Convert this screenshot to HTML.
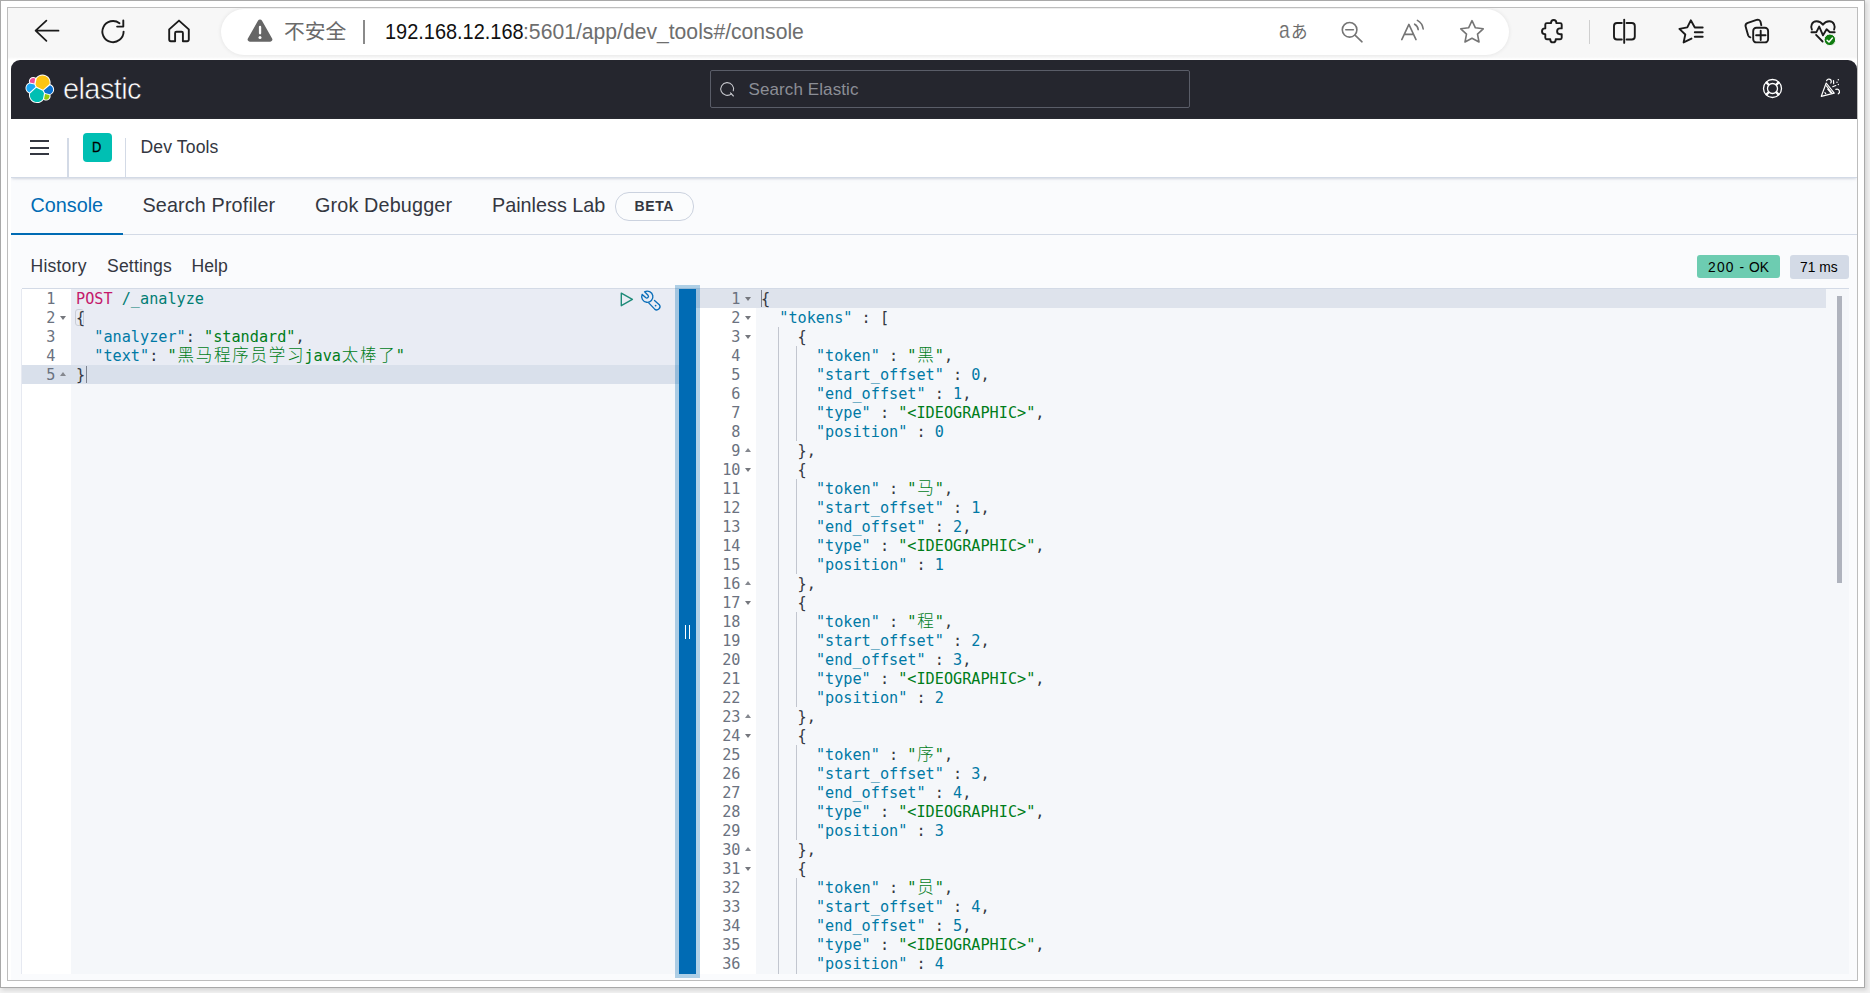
<!DOCTYPE html>
<html lang="zh-CN">
<head>
<meta charset="utf-8">
<title>Console - Dev Tools - Elastic</title>
<style>
*{box-sizing:border-box;margin:0;padding:0}
html,body{width:1870px;height:993px;overflow:hidden;background:#f1f1f1}
body{position:relative;font-family:"Liberation Sans","Noto Sans CJK SC",sans-serif;color:#343741}
.abs{position:absolute}
#outer{position:absolute;left:0;top:0;width:1865px;height:988px;border:1px solid #a9a9a9;background:#fff;box-shadow:2px 2px 4px rgba(0,0,0,.12)}
#inner{position:absolute;left:7px;top:7px;width:1851px;height:974px;border:1px solid #bdbdbd;background:#fff;overflow:hidden}
/* coordinates inside #inner are offset by 8px: use a shifted canvas */
#cv{position:absolute;left:-8px;top:-8px;width:1870px;height:993px}
#chrome{position:absolute;left:8px;top:8px;width:1849px;height:53px;background:#f7f7f7}
#pill{position:absolute;left:221px;top:9.250px;width:1288px;height:45.250px;border-radius:23px;background:#fff;box-shadow:0 0 4px rgba(0,0,0,.09)}
.t{position:absolute;white-space:nowrap;line-height:1}
#page{position:absolute;left:11px;top:60px;width:1846px;height:920px;background:#fafbfd;border-radius:9px 9px 0 0;overflow:hidden}
#page>#pg{position:absolute;left:-11px;top:-60px;width:1870px;height:993px}
#hdr{position:absolute;left:11px;top:60px;width:1846px;height:59px;background:#25262e}
#search{position:absolute;left:710px;top:70px;width:480px;height:38px;border:1px solid #5a5d68;border-radius:2px;background:#25262e}
#nav{position:absolute;left:11px;top:119px;width:1846px;height:59px;background:#fff;border-bottom:1px solid #d3dae6;box-shadow:0 2px 2px -1px rgba(152,162,179,.3),0 1px 5px -2px rgba(152,162,179,.3)}
.vsep{position:absolute;width:1px;background:#d3dae6}
#avatar{position:absolute;left:83px;top:133px;width:29px;height:29px;border-radius:4px;background:#00bfb3}
#tabline{position:absolute;left:11px;top:234px;width:1846px;height:1px;background:#d3dae6}
#tabsel{position:absolute;left:11px;top:233px;width:112px;height:2px;background:#006bb4}
#beta{position:absolute;left:615px;top:192px;width:79px;height:29px;border:1px solid #cbd2df;border-radius:14px;background:#fbfcfd}
.badge{position:absolute;height:23px;border-radius:3px}
/* editors */
#edtop{position:absolute;left:22px;top:288px;width:1827px;height:1px;background:#d3dae6}
#led{position:absolute;left:22px;top:289px;width:657px;height:685px;background:#f5f7fa;overflow:hidden}
#lgut{position:absolute;left:0;top:0;width:49px;height:685px;background:#fff}
#red{position:absolute;left:700px;top:289px;width:1149px;height:685px;background:#f5f7fa;overflow:hidden}
#rgut{position:absolute;left:0;top:0;width:56px;height:685px;background:#fff}
.code{position:absolute;top:1px;font-family:"DejaVu Sans Mono","Liberation Mono","Noto Sans CJK SC",monospace;font-size:15.2px;line-height:19px;color:#343741;white-space:pre;font-kerning:none;font-variant-ligatures:none}
.ln{position:absolute;left:0;height:19px;white-space:pre}
.gn{position:absolute;left:0;height:19px;text-align:right;color:#6b7280;font-family:"DejaVu Sans Mono","Liberation Mono",monospace;font-size:15.2px;line-height:19px}
.fd,.fu{position:absolute;width:0;height:0;border-left:3px solid transparent;border-right:3px solid transparent}
.fd{border-top:4px solid #75777d}
.fu{border-bottom:4px solid #85888f}
.m{color:#c4196b}.u{color:#017d73}.k{color:#0079a5}.s{color:#007d1a}.n{color:#0079a5}.p{color:#343741}
.cj{display:inline-block;width:18.26px;text-align:center;font-family:"Noto Sans CJK SC","WenQuanYi Zen Hei",sans-serif;font-weight:300;font-size:16.5px;line-height:19px;vertical-align:top;position:relative;top:-2px}
#resz-o{position:absolute;left:675px;top:285px;width:25px;height:693px;background:rgba(0,107,180,.3)}
#resz{position:absolute;left:679px;top:289px;width:17px;height:685px;background:#006bb4}
.hl{position:absolute;height:19px}
.ig{position:absolute;width:1px;background:#c2c6cf}
svg{position:absolute;overflow:visible}
</style>
</head>
<body>
<div id="outer"></div>
<div id="inner"><div id="cv">
<div id="chrome"></div>
<div class="abs" style="left:8px;top:57px;width:1849px;height:4px;background:linear-gradient(#f7f7f7,#fff 60%)"></div>
<div id="pill"></div>

<!-- browser toolbar icons -->
<svg id="ic-back" style="left:34px;top:19px" width="26" height="24" viewBox="0 0 26 24" fill="none" stroke="#1b1b1b" stroke-width="1.75" stroke-linecap="round" stroke-linejoin="round"><path d="M24.5 11.7H1.8M12.4 1.6 1.6 11.7l10.8 10.1"/></svg>
<svg id="ic-reload" style="left:100px;top:18px" width="26" height="26" viewBox="0 0 26 26" fill="none" stroke="#1b1b1b" stroke-width="1.9" stroke-linecap="round" stroke-linejoin="round"><path d="M23.6 13.6A10.6 10.6 0 1 1 19.5 5.2"/><path d="M23.3 2.4v6.2h-6.2"/></svg>
<svg id="ic-home" style="left:167px;top:19px" width="24" height="24" viewBox="0 0 24 24" fill="none" stroke="#1b1b1b" stroke-width="1.9" stroke-linecap="round" stroke-linejoin="round"><path d="M2.2 10.4 12 1.6l9.8 8.8v10.2a1.6 1.6 0 0 1-1.6 1.6h-4.3v-8.1a1.3 1.3 0 0 0-1.3-1.3H9.4a1.3 1.3 0 0 0-1.3 1.3v8.1H3.8a1.6 1.6 0 0 1-1.6-1.6z"/></svg>
<svg id="ic-warn" style="left:247px;top:19px" width="26" height="23" viewBox="0 0 26 23"><path d="M11.1 1.6a2.2 2.2 0 0 1 3.8 0l10.2 17.8a2.2 2.2 0 0 1-1.9 3.3H2.8a2.2 2.2 0 0 1-1.9-3.3z" fill="#666"/><rect x="11.9" y="6.8" width="2.3" height="8.6" rx="1.1" fill="#fff"/><circle cx="13" cy="18.6" r="1.5" fill="#fff"/></svg>
<div class="t" id="t-unsafe" style="left:284px;top:22px;font-size:20.8px;color:#6a6a6a;font-family:'Liberation Sans','Noto Sans CJK SC',sans-serif">不安全</div>
<div class="vsep" style="left:363px;top:20px;height:24px;background:#8a8a8a;width:1.5px"></div>
<div class="t" id="t-url" style="left:385px;top:21.300px;font-size:22.3px;color:#111;transform:scaleX(.894);transform-origin:0 0">192.168.12.168</div>
<div class="t" id="t-url2" style="left:523px;top:21.300px;font-size:22.3px;color:#6e6e6e;transform:scaleX(.948);transform-origin:0 0">:5601/app/dev_tools#/console</div>

<div class="t" id="t-trans" style="left:1279px;top:18px;color:#6c6c6c;font-family:'Liberation Sans','Noto Sans CJK JP',sans-serif"><span style="display:inline-block;font-size:24px;transform:scaleX(.8);transform-origin:0 50%;-webkit-text-stroke:.15px #fff;width:12px">a</span><span style="font-size:16.5px;position:relative;top:-.5px">あ</span></div>
<svg id="ic-zoomout" style="left:1340px;top:20px" width="26" height="24" viewBox="0 0 26 24" fill="none" stroke="#757575" stroke-width="1.6" stroke-linecap="round"><circle cx="9.6" cy="9.8" r="7.3"/><path d="M5.8 9.8h7.6M15 15.2l7 6.6"/></svg>
<svg id="ic-read" style="left:1400px;top:18px" width="26" height="24" viewBox="0 0 26 24" fill="none" stroke="#757575" stroke-width="1.6" stroke-linecap="round" stroke-linejoin="round"><path d="M1.8 21.6 8.9 6.4l7.1 15.2M4.4 16.4h9"/><path d="M14.6 6.2a7 7 0 0 1 3.6 5.4M17.4 2.4a11.5 11.5 0 0 1 5.8 8.6"/></svg>
<svg id="ic-star" style="left:1459px;top:19px" width="26" height="25" viewBox="0 0 26 25" fill="none" stroke="#757575" stroke-width="1.6" stroke-linejoin="round"><path d="M13 1.6l3.4 7.2 7.8 1-5.7 5.4 1.5 7.8L13 19.2 6 23l1.5-7.8L1.8 9.8l7.8-1z"/></svg>
<svg id="ic-ext" style="left:1535px;top:14px" width="35" height="34" viewBox="0 0 35 34" fill="none" stroke="#1b1b1b" stroke-width="1.9" stroke-linecap="round" stroke-linejoin="round"><path d="M11.800 9.100H16.100V8.600A2.600 2.600 0 0 1 21.300 8.600V9.100H25.200A1.500 1.500 0 0 1 26.700 10.600V14.400H25A2.900 2.900 0 0 0 25 20.200H26.700V23.700A1.500 1.500 0 0 1 25.200 25.200H20.700V25.700A2.700 2.700 0 0 1 15.300 25.700V25.200H11.800A1.500 1.500 0 0 1 10.300 23.700V20.200H9.900A2.900 2.900 0 0 1 9.900 14.400H10.300V10.600A1.500 1.500 0 0 1 11.800 9.100Z"/></svg>
<div class="vsep" style="left:1589px;top:20px;height:24px;background:#cfcfcf"></div>
<svg id="ic-split" style="left:1605px;top:14px" width="40" height="34" viewBox="0 0 40 34" fill="none" stroke="#1b1b1b" stroke-width="1.9" stroke-linecap="round" stroke-linejoin="round"><path d="M16.800 9H12a3 3 0 0 0-3 3V22.500a3 3 0 0 0 3 3H16.800M21.600 9H26.800a3 3 0 0 1 3 3V22.500a3 3 0 0 1-3 3H21.600M19.200 5.600V28.900"/></svg>
<svg id="ic-fav" style="left:1605px;top:14px" width="105" height="34" viewBox="0 0 105 34" fill="none" stroke="#1b1b1b" stroke-width="1.9" stroke-linecap="round" stroke-linejoin="round"><path d="M86.500 24.600 78.600 28.400 80.300 20.500 74.400 14.900 82.300 13.400 85.800 6.300 89.800 13.500H97.700M89.800 18.200H97.700M89.800 22.700H97.700"/></svg>
<svg id="ic-coll" style="left:1735px;top:14px" width="40" height="34" viewBox="0 0 40 34" fill="none" stroke="#1b1b1b" stroke-width="1.9" stroke-linecap="round" stroke-linejoin="round"><rect x="18.200" y="13.800" width="14.900" height="14.600" rx="3.200"/><path d="M25.700 16.600V26.100M21.100 21.200H30.600"/><path d="M15.400 23.300C14.200 23 13.500 22.400 13.100 21.200L10.600 12.600C10.200 10.800 11 9.400 12.800 8.800L21.600 5.900C23.600 5.300 25 6.100 25.500 7.800L26.300 11.200"/></svg>
<svg id="ic-heart" style="left:1735px;top:14px" width="105" height="34" viewBox="0 0 105 34" fill="none" stroke="#1b1b1b" stroke-width="1.9" stroke-linecap="round" stroke-linejoin="round"><path d="M76.900 15.600C75.300 12.600 76.600 7.300 81.600 7.300C84.200 7.300 86.400 8.600 87.900 10.700C89.400 8.600 91.600 7.300 94.200 7.300C99.200 7.300 100.500 12.600 99.100 15.600"/><path d="M76.400 18.200H81.400L84.200 12.600 88 21.300 91.600 15.200 94.900 18.200H99.700"/><path d="M81.100 20.900 87.600 27.500"/><circle cx="94.900" cy="25.800" r="5.800" fill="#107c10" stroke="#f7f7f7" stroke-width="1"/><path d="M92.100 26.200l1.900 1.800 3.400-3.900" stroke="#fff" stroke-width="1.500"/></svg>

<div id="page"><div id="pg">
<div id="hdr"></div>
<!-- elastic logo -->
<svg id="logo" style="left:24.500px;top:73.500px" width="29.500" height="29.500" viewBox="0 0 32 32">
<path d="M31.600 16.800c0-2.600-1.600-4.900-4-5.800.1-.5.200-1.100.2-1.700C27.800 4.400 23.800.5 19 .5c-2.900 0-5.500 1.400-7.200 3.700-.8-.6-1.800-1-2.900-1-2.600 0-4.700 2.100-4.700 4.700 0 .6.100 1.100.3 1.600C2.100 10.400.5 12.800.5 15.300c0 2.600 1.600 4.900 4 5.800-.1.500-.2 1.100-.2 1.700 0 4.800 3.900 8.700 8.700 8.700 2.900 0 5.500-1.400 7.200-3.700.8.600 1.800 1 2.900 1 2.600 0 4.700-2.100 4.700-4.700 0-.6-.1-1.100-.3-1.600 2.400-.900 4.100-3.200 4.100-5.700" fill="#fff"/>
<path d="M12.700 13.900l6.900 3.100 6.900-6.100c.1-.5.200-1 .2-1.500 0-4.300-3.500-7.700-7.700-7.700-2.600 0-4.900 1.300-6.400 3.400l-1.200 6z" fill="#fec514"/>
<path d="M5.500 21.100c-.1.500-.2 1-.2 1.600 0 4.300 3.500 7.700 7.800 7.700 2.600 0 5-1.300 6.400-3.400l1.100-6-1.500-2.900-6.900-3.100z" fill="#00bfb3"/>
<path d="M5.400 9.200l4.700 1.100 1-5.300c-.6-.5-1.400-.7-2.200-.7-2 0-3.700 1.700-3.700 3.700 0 .400.100.8.200 1.200" fill="#f04e98"/>
<path d="M5 10.300c-2.100.7-3.500 2.700-3.500 4.900 0 2.200 1.300 4.100 3.300 4.900l6.600-6-1.200-2.600z" fill="#1ba9f5"/>
<path d="M20.700 27c.6.500 1.400.8 2.200.8 2 0 3.700-1.700 3.700-3.700 0-.400-.1-.900-.2-1.300l-4.700-1.100z" fill="#93c90e"/>
<path d="M21.700 20.700l5.200 1.200c2.100-.700 3.600-2.700 3.600-4.900 0-2.200-1.300-4.100-3.400-4.900l-6.800 5.900z" fill="#0b72d0"/>
</svg>
<div class="t" id="t-elastic" style="left:63px;top:75px;font-size:29px;color:#fff;letter-spacing:-0.6px;-webkit-text-stroke:.55px #25262e">elastic</div>
<div id="search"></div>
<svg id="ic-search" style="left:719px;top:81px" width="17" height="17" viewBox="0 0 17 17" fill="none" stroke="#c5c6cb" stroke-width="1.1" stroke-linecap="round"><path d="M12.600 12.600A6.400 6.400 0 1 1 14.300 9.800M11.400 11.800l3 3.200"/></svg>
<div class="t" id="t-search" style="left:748.5px;top:80.600px;font-size:17px;color:#8c8e96;letter-spacing:.1px">Search Elastic</div>
<svg id="ic-help" style="left:1755px;top:72px" width="40" height="32" viewBox="0 0 40 32" fill="none" stroke="#fff" stroke-width="1.3"><circle cx="17.500" cy="16.500" r="9"/><circle cx="17.500" cy="16.500" r="5"/><path d="M11.100 10.100l2.900 2.900M23.900 10.100l-2.900 2.900M11.100 22.900l2.900-2.900M23.900 22.900l-2.900-2.900" stroke-width="2.400"/></svg>
<svg id="ic-cheer" style="left:1755px;top:72px" width="95" height="32" viewBox="0 0 95 32" fill="none" stroke="#fff" stroke-width="1.200" stroke-linecap="round" stroke-linejoin="round"><path d="M66.300 24.300 71.200 11 79.200 21.200Z"/><path d="M71.400 13.800 77.200 21.400M72.700 17.200l3 3.300M69.900 20.700l.8 1"/><path d="M71.600 8.700c.5-1.400 2.100-2 3.400-1.300 1.500.8 1.600 2.300.8 3.600"/><path d="M80.800 17.400c1.400-.5 2.900 0 3.500 1.300.5 1.200 0 2.400-1 3.100"/><path d="M77.700 14.700l3.100-1.200M78.500 8.500l.2 3.100"/><path d="M83.300 7.600v.1M82 10.200v.1M83.300 12.400v.1" stroke-width="1.400"/></svg>

<div id="nav"></div>
<div class="abs" style="left:30px;top:140px;width:19px;height:2px;background:#343741"></div>
<div class="abs" style="left:30px;top:147px;width:19px;height:2px;background:#343741"></div>
<div class="abs" style="left:30px;top:153px;width:19px;height:2px;background:#343741"></div>
<div class="vsep" style="left:67.400px;top:138px;height:39px;width:1.500px"></div>
<div class="vsep" style="left:124.900px;top:138px;height:39px;width:1.300px"></div>
<div id="avatar"></div>
<div class="t" id="t-D" style="left:92.300px;top:140px;font-size:14px;color:#000;-webkit-text-stroke:.3px #000;transform:scaleX(.92);transform-origin:0 0">D</div>
<div class="t" id="t-devtools" style="left:140.500px;top:139.400px;font-size:17.6px;color:#343741;letter-spacing:.12px">Dev Tools</div>

<div id="tabline"></div><div id="tabsel"></div>
<div class="t" id="t-console" style="left:30.500px;top:196px;font-size:19.8px;color:#006bb4">Console</div>
<div class="t" id="t-profiler" style="left:142.500px;top:196px;font-size:19.8px;letter-spacing:.13px">Search Profiler</div>
<div class="t" id="t-grok" style="left:315px;top:196px;font-size:19.8px;letter-spacing:.15px">Grok Debugger</div>
<div class="t" id="t-painless" style="left:492px;top:196px;font-size:19.8px">Painless Lab</div>
<div id="beta"></div>
<div class="t" id="t-beta" style="left:634.500px;top:199px;font-size:14px;font-weight:bold;letter-spacing:.6px">BETA</div>

<div class="t" id="t-history" style="left:30.500px;top:258px;font-size:17.6px;letter-spacing:.2px">History</div>
<div class="t" id="t-settings" style="left:107px;top:258px;font-size:17.6px;letter-spacing:.17px">Settings</div>
<div class="t" id="t-help" style="left:191.500px;top:258px;font-size:17.6px">Help</div>

<div class="badge" style="left:1697px;top:255px;width:83px;background:#6dccb1"></div>
<div class="t" id="t-200" style="left:1708px;top:260.700px;font-size:13.8px;color:#000;word-spacing:.8px;letter-spacing:.1px"><span style="letter-spacing:1.25px">200</span> - OK</div>
<div class="badge" style="left:1790px;top:255px;width:59px;height:24px;background:#d3dae6"></div>
<div class="t" id="t-ms" style="left:1800px;top:260.700px;font-size:13.8px;color:#000">71 ms</div>

<div id="edtop"></div>
<div class="abs" style="left:21px;top:289px;width:1px;height:685px;background:#e6e9f1"></div>
<div id="led">
  <div class="hl" style="left:49px;top:0;width:608px;height:76px;background:#e9ecf4"></div>
  <div class="hl" style="left:0;top:76px;width:657px;background:#d9e0eb"></div>
  <div id="lgut"></div>
  <div class="hl" style="left:0;top:76px;width:49px;background:#d9e0eb"></div>
  <div class="abs" style="left:53px;top:20px;width:9px;height:17px;border:1px solid #c9cdd6;border-radius:3px"></div>
  <div class="abs" style="left:64px;top:77px;width:1px;height:17px;background:#7d8390"></div>
  <div class="code" style="left:0;width:49px">
<div class="gn" style="top:0px;width:33.5px">1</div>
<div class="gn" style="top:19px;width:33.5px">2</div>
<i class="fd" style="top:26px;left:38px"></i>
<div class="gn" style="top:38px;width:33.5px">3</div>
<div class="gn" style="top:57px;width:33.5px">4</div>
<div class="gn" style="top:76px;width:33.5px">5</div>
<i class="fu" style="top:82px;left:38px"></i>
  </div>
  <div class="code" style="left:54px">
<div class="ln" style="top:0px"><span class="m">POST</span><span class="u"> /_analyze</span></div>
<div class="ln" style="top:19px"><span class="p">{</span></div>
<div class="ln" style="top:38px">  <span class="k">"analyzer"</span><span class="p">: </span><span class="s">"standard"</span><span class="p">,</span></div>
<div class="ln" style="top:57px">  <span class="k">"text"</span><span class="p">: </span><span class="s">"<span class="cj">黑</span><span class="cj">马</span><span class="cj">程</span><span class="cj">序</span><span class="cj">员</span><span class="cj">学</span><span class="cj">习</span>java<span class="cj">太</span><span class="cj">棒</span><span class="cj">了</span>"</span></div>
<div class="ln" style="top:76px"><span class="p">}</span></div>
  </div>
  <svg id="ic-play" style="left:590px;top:-3px" width="28" height="28" viewBox="0 0 28 28" fill="none" stroke="#1c8a78" stroke-width="1.400" stroke-linejoin="round"><path d="M9.300 7.200V19.700L20.400 13.450Z"/></svg>
  <svg id="ic-wrench" style="left:590px;top:-3px" width="56" height="28" viewBox="0 0 56 28" fill="none" stroke="#0a6eb9" stroke-width="1.350" stroke-linecap="round" stroke-linejoin="round"><path d="M32.600 5.800A5.600 5.600 0 1 1 30.200 8.400L33.600 11.600A1.700 1.700 0 0 0 36 9.200Z"/><path d="M36.700 16.900 42.500 22.900A3.200 3.200 0 0 0 47.300 18.700L42.500 14.500"/><circle cx="43.600" cy="19.600" r=".9" fill="#0a6eb9" stroke="none"/></svg>
</div>
<div class="abs" style="left:696px;top:289px;width:4px;height:685px;background:#fff"></div><div class="abs" style="left:696px;top:289px;width:4px;height:19px;background:#dee3ec"></div>
<div id="resz-o"></div><div id="resz"></div>
<div class="abs" style="left:685px;top:625px;width:1px;height:14px;background:#fff"></div>
<div class="abs" style="left:689px;top:625px;width:1px;height:14px;background:#fff"></div>
<div id="red">
  <div class="hl" style="left:0;top:0;width:1126px;background:#dee3ec"></div>
  <div id="rgut"></div>
  <div class="hl" style="left:0;top:0;width:56px;background:#dee3ec"></div>
  <div class="abs" style="left:61px;top:1px;width:1px;height:17px;background:#7d8390"></div>
  <div class="ig" style="left:78px;top:38px;height:647px"></div>
  <div class="ig" style="left:96px;top:57px;height:95px"></div>
  <div class="ig" style="left:96px;top:190px;height:95px"></div>
  <div class="ig" style="left:96px;top:323px;height:95px"></div>
  <div class="ig" style="left:96px;top:456px;height:95px"></div>
  <div class="ig" style="left:96px;top:589px;height:96px"></div>
  <div class="code" style="left:0;width:57px">
<div class="gn" style="top:0px;width:40.5px">1</div>
<i class="fd" style="top:7px;left:45px"></i>
<div class="gn" style="top:19px;width:40.5px">2</div>
<i class="fd" style="top:26px;left:45px"></i>
<div class="gn" style="top:38px;width:40.5px">3</div>
<i class="fd" style="top:45px;left:45px"></i>
<div class="gn" style="top:57px;width:40.5px">4</div>
<div class="gn" style="top:76px;width:40.5px">5</div>
<div class="gn" style="top:95px;width:40.5px">6</div>
<div class="gn" style="top:114px;width:40.5px">7</div>
<div class="gn" style="top:133px;width:40.5px">8</div>
<div class="gn" style="top:152px;width:40.5px">9</div>
<i class="fu" style="top:158px;left:45px"></i>
<div class="gn" style="top:171px;width:40.5px">10</div>
<i class="fd" style="top:178px;left:45px"></i>
<div class="gn" style="top:190px;width:40.5px">11</div>
<div class="gn" style="top:209px;width:40.5px">12</div>
<div class="gn" style="top:228px;width:40.5px">13</div>
<div class="gn" style="top:247px;width:40.5px">14</div>
<div class="gn" style="top:266px;width:40.5px">15</div>
<div class="gn" style="top:285px;width:40.5px">16</div>
<i class="fu" style="top:291px;left:45px"></i>
<div class="gn" style="top:304px;width:40.5px">17</div>
<i class="fd" style="top:311px;left:45px"></i>
<div class="gn" style="top:323px;width:40.5px">18</div>
<div class="gn" style="top:342px;width:40.5px">19</div>
<div class="gn" style="top:361px;width:40.5px">20</div>
<div class="gn" style="top:380px;width:40.5px">21</div>
<div class="gn" style="top:399px;width:40.5px">22</div>
<div class="gn" style="top:418px;width:40.5px">23</div>
<i class="fu" style="top:424px;left:45px"></i>
<div class="gn" style="top:437px;width:40.5px">24</div>
<i class="fd" style="top:444px;left:45px"></i>
<div class="gn" style="top:456px;width:40.5px">25</div>
<div class="gn" style="top:475px;width:40.5px">26</div>
<div class="gn" style="top:494px;width:40.5px">27</div>
<div class="gn" style="top:513px;width:40.5px">28</div>
<div class="gn" style="top:532px;width:40.5px">29</div>
<div class="gn" style="top:551px;width:40.5px">30</div>
<i class="fu" style="top:557px;left:45px"></i>
<div class="gn" style="top:570px;width:40.5px">31</div>
<i class="fd" style="top:577px;left:45px"></i>
<div class="gn" style="top:589px;width:40.5px">32</div>
<div class="gn" style="top:608px;width:40.5px">33</div>
<div class="gn" style="top:627px;width:40.5px">34</div>
<div class="gn" style="top:646px;width:40.5px">35</div>
<div class="gn" style="top:665px;width:40.5px">36</div>
  </div>
  <div class="code" style="left:61px">
<div class="ln" style="top:0px"><span class="p">{</span></div>
<div class="ln" style="top:19px">  <span class="k">"tokens"</span><span class="p"> : [</span></div>
<div class="ln" style="top:38px">    <span class="p">{</span></div>
<div class="ln" style="top:57px">      <span class="k">"token"</span><span class="p"> : </span><span class="s">"<span class="cj">黑</span>"</span><span class="p">,</span></div>
<div class="ln" style="top:76px">      <span class="k">"start_offset"</span><span class="p"> : </span><span class="n">0</span><span class="p">,</span></div>
<div class="ln" style="top:95px">      <span class="k">"end_offset"</span><span class="p"> : </span><span class="n">1</span><span class="p">,</span></div>
<div class="ln" style="top:114px">      <span class="k">"type"</span><span class="p"> : </span><span class="s">"&lt;IDEOGRAPHIC&gt;"</span><span class="p">,</span></div>
<div class="ln" style="top:133px">      <span class="k">"position"</span><span class="p"> : </span><span class="n">0</span></div>
<div class="ln" style="top:152px">    <span class="p">},</span></div>
<div class="ln" style="top:171px">    <span class="p">{</span></div>
<div class="ln" style="top:190px">      <span class="k">"token"</span><span class="p"> : </span><span class="s">"<span class="cj">马</span>"</span><span class="p">,</span></div>
<div class="ln" style="top:209px">      <span class="k">"start_offset"</span><span class="p"> : </span><span class="n">1</span><span class="p">,</span></div>
<div class="ln" style="top:228px">      <span class="k">"end_offset"</span><span class="p"> : </span><span class="n">2</span><span class="p">,</span></div>
<div class="ln" style="top:247px">      <span class="k">"type"</span><span class="p"> : </span><span class="s">"&lt;IDEOGRAPHIC&gt;"</span><span class="p">,</span></div>
<div class="ln" style="top:266px">      <span class="k">"position"</span><span class="p"> : </span><span class="n">1</span></div>
<div class="ln" style="top:285px">    <span class="p">},</span></div>
<div class="ln" style="top:304px">    <span class="p">{</span></div>
<div class="ln" style="top:323px">      <span class="k">"token"</span><span class="p"> : </span><span class="s">"<span class="cj">程</span>"</span><span class="p">,</span></div>
<div class="ln" style="top:342px">      <span class="k">"start_offset"</span><span class="p"> : </span><span class="n">2</span><span class="p">,</span></div>
<div class="ln" style="top:361px">      <span class="k">"end_offset"</span><span class="p"> : </span><span class="n">3</span><span class="p">,</span></div>
<div class="ln" style="top:380px">      <span class="k">"type"</span><span class="p"> : </span><span class="s">"&lt;IDEOGRAPHIC&gt;"</span><span class="p">,</span></div>
<div class="ln" style="top:399px">      <span class="k">"position"</span><span class="p"> : </span><span class="n">2</span></div>
<div class="ln" style="top:418px">    <span class="p">},</span></div>
<div class="ln" style="top:437px">    <span class="p">{</span></div>
<div class="ln" style="top:456px">      <span class="k">"token"</span><span class="p"> : </span><span class="s">"<span class="cj">序</span>"</span><span class="p">,</span></div>
<div class="ln" style="top:475px">      <span class="k">"start_offset"</span><span class="p"> : </span><span class="n">3</span><span class="p">,</span></div>
<div class="ln" style="top:494px">      <span class="k">"end_offset"</span><span class="p"> : </span><span class="n">4</span><span class="p">,</span></div>
<div class="ln" style="top:513px">      <span class="k">"type"</span><span class="p"> : </span><span class="s">"&lt;IDEOGRAPHIC&gt;"</span><span class="p">,</span></div>
<div class="ln" style="top:532px">      <span class="k">"position"</span><span class="p"> : </span><span class="n">3</span></div>
<div class="ln" style="top:551px">    <span class="p">},</span></div>
<div class="ln" style="top:570px">    <span class="p">{</span></div>
<div class="ln" style="top:589px">      <span class="k">"token"</span><span class="p"> : </span><span class="s">"<span class="cj">员</span>"</span><span class="p">,</span></div>
<div class="ln" style="top:608px">      <span class="k">"start_offset"</span><span class="p"> : </span><span class="n">4</span><span class="p">,</span></div>
<div class="ln" style="top:627px">      <span class="k">"end_offset"</span><span class="p"> : </span><span class="n">5</span><span class="p">,</span></div>
<div class="ln" style="top:646px">      <span class="k">"type"</span><span class="p"> : </span><span class="s">"&lt;IDEOGRAPHIC&gt;"</span><span class="p">,</span></div>
<div class="ln" style="top:665px">      <span class="k">"position"</span><span class="p"> : </span><span class="n">4</span></div>
  </div>
  <div class="abs" style="left:1137px;top:7px;width:5px;height:287px;background:#afb3bd"></div>
</div>
</div></div>
</div></div>
</body>
</html>
